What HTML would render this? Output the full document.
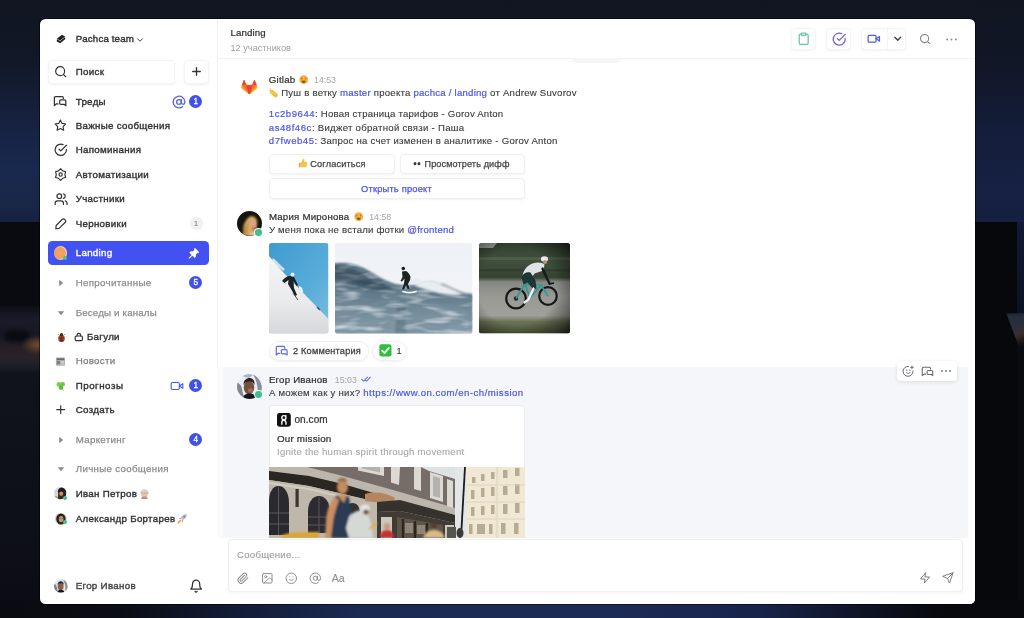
<!DOCTYPE html>
<html lang="ru">
<head>
<meta charset="utf-8">
<title>Pachca</title>
<style>
*{box-sizing:border-box;margin:0;padding:0}
html,body{width:1024px;height:618px;overflow:hidden;background:#10141f}
body{position:relative;font-family:"Liberation Sans",sans-serif;font-size:10px;color:#333;-webkit-font-smoothing:antialiased}
.abs,.t,.sb,.g,.m,.ic{position:absolute}
#bg{position:absolute;left:0;top:0;width:1024px;height:618px;overflow:hidden;background:#10141f}
#bg div{position:absolute}
#win{position:absolute;left:40px;top:18.5px;width:935px;height:585.300px;background:#fff;border-radius:5.500px;overflow:hidden;box-shadow:0 0 0 1px rgba(0,0,0,.55)}
#in{position:absolute;left:-40px;top:-18.5px;width:1024px;height:618px;will-change:transform}
/* text helpers: top = centerY-7 */
.t{height:14px;line-height:14px;white-space:nowrap}
.sb{left:75.7px;font-weight:400;font-size:9.75px;letter-spacing:.3px;color:#333;-webkit-text-stroke-width:.38px}
.g{left:75.7px;font-weight:400;font-size:9.75px;letter-spacing:.3px;color:#8c8c8c;-webkit-text-stroke-width:.25px}
.m{font-size:9.6px;letter-spacing:.26px;color:#3a3a3a;-webkit-text-stroke-width:.12px}
.nm{font-size:9.7px;letter-spacing:.2px;color:#333;-webkit-text-stroke-width:.24px}
.tm{font-size:8.8px;color:#a5a5a5}
.lk{color:#4a55e8;-webkit-text-stroke-width:.2px}
.hs{letter-spacing:.52px}
.badge{position:absolute;width:13.200px;height:13.200px;border-radius:50%;background:#4050ea;color:#fff;font-size:8.200px;font-weight:400;-webkit-text-stroke-width:.3px;text-align:center;line-height:13.200px}
svg{position:absolute;overflow:visible}
.s{fill:none;stroke:#333;stroke-width:2.1;stroke-linecap:round;stroke-linejoin:round}
.btn{position:absolute;background:#fff;border:1px solid #efeff0;border-radius:4px;box-shadow:0 1px 2.500px rgba(0,0,0,.055)}
</style>
</head>
<body>
<div id="bg">

<div style="left:0;top:0;width:1024px;height:222px;background:linear-gradient(180deg,#111521 0%,#121828 28%,#15203c 50%,#19284e 75%,#192749 92%,#162141 100%)"></div>
<div style="left:975px;top:0;width:49px;height:222px;background:linear-gradient(180deg,#111521 0%,#111727 30%,#141d3b 60%,#162143 85%,#151f40 100%)"></div>
<div style="left:0;top:221.500px;width:1024px;height:397px;background:#0a0b11"></div>
<div style="left:0;top:306px;width:44px;height:68px;background:linear-gradient(180deg,#0d0e15 0%,#191b28 18%,#171826 45%,#241f25 60%,#2b2326 75%,#1b1d2a 90%,#10121c 100%)"></div>
<div style="left:4px;top:330px;width:26px;height:12px;border-radius:6px;background:#0b0c12;filter:blur(2px)"></div>
<div style="left:22px;top:336px;width:22px;height:18px;background:radial-gradient(ellipse at 75% 50%,#74502f 0%,#4c3528 40%,rgba(43,35,38,0) 75%);filter:blur(1.5px)"></div>
<div style="left:0;top:372px;width:44px;height:246px;background:linear-gradient(180deg,#10121c 0%,#0e1019 60%,#0b0c12 100%)"></div>
<div style="left:975px;top:222px;width:42px;height:396px;background:#07080c"></div>
<div style="left:1017px;top:222px;width:7px;height:92px;background:linear-gradient(180deg,#121a34,#0d1124)"></div>
<div style="left:1006px;top:313px;width:22px;height:40px;background:linear-gradient(160deg,#262c3c 0%,#2a2e3c 35%,#3a2e2c 55%,#0a0b11 80%);filter:blur(1.5px);clip-path:polygon(0 0,100% 0,100% 100%,70% 100%)"></div>
<div style="left:0;top:600px;width:1024px;height:18px;background:linear-gradient(90deg,#0a0b10 0%,#0b0d14 12%,#131c36 23%,#1b2a52 35%,#1c2b55 60%,#18244a 74%,#0f1426 84%,#08090d 92%,#08090d 100%)"></div>

</div>
<div id="win"><div id="in">
<div class="abs" style="left:216.5px;top:18px;width:1px;height:586px;background:#f3f3f4"></div>
<svg viewBox="0 0 20 20" width="12" height="12" style="left:55.2px;top:33.2px"><path d="M3 9.500 11.500 3 17 6 8.500 12.500Z" fill="#222"/><path d="M3 10.300 8.500 13.300 17 6.800V10.500L8.500 17 3 14Z" fill="#222"/></svg>
<div class="t sb" style="left:75.7px;top:32.40px;letter-spacing:.12px">Pachca team</div>
<svg viewBox="0 0 24 24" width="10" height="10" style="left:134.8px;top:34.6px"><path class="s" style="stroke-width:2.4;stroke:#444" d="m6 9 6 6 6-6"/></svg>
<div class="btn" style="left:47.5px;top:60px;width:127.500px;height:23.500px;border-color:#f3f3f4;box-shadow:0 1px 2.500px rgba(0,0,0,.06)"></div>
<div class="btn" style="left:183.500px;top:60px;width:25px;height:23.500px;border-color:#f3f3f4;box-shadow:0 1px 2.500px rgba(0,0,0,.06)"></div>
<svg viewBox="0 0 24 24" width="13.4" height="13.4" style="left:54.10px;top:65.20px"><g class="s"><circle cx="11" cy="11" r="8"/><path d="m21 21-4.3-4.3"/></g></svg>
<div class="t sb" style="left:75.7px;top:64.80px;">Поиск</div>
<svg viewBox="0 0 24 24" width="13" height="13" style="left:189.50px;top:65.20px"><g class="s" style="stroke-width:2.5;"><path d="M5 12h14"/><path d="M12 5v14"/></g></svg>
<svg viewBox="0 0 24 24" width="14.2" height="14.2" style="left:53.40px;top:93.65px"><g class="s"><path d="M8.5 16.8H5.5L2.35 19.7V6.3a2 2 0 0 1 2-2H15.5a2 2 0 0 1 2 2v1.2"/><path d="M13.3 10h6.350a2 2 0 0 1 2 2v7.700L18.800 17.500H13.300a2 2 0 0 1-2-2V12a2 2 0 0 1 2-2Z"/></g></svg>
<div class="t sb" style="left:75.7px;top:94.70px;">Треды</div>
<svg viewBox="0 0 24 24" width="12.8" height="12.8" style="left:54.30px;top:119.15px"><g class="s"><polygon points="12 2 15.09 8.26 22 9.27 17 14.14 18.18 21.02 12 17.77 5.82 21.02 7 14.14 2 9.27 8.91 8.26 12 2"/></g></svg>
<div class="t sb" style="left:75.7px;top:118.90px;">Важные сообщения</div>
<svg viewBox="0 0 24 24" width="13.6" height="13.6" style="left:53.90px;top:143.20px"><g class="s"><path d="M22 11.08V12a10 10 0 1 1-5.93-9.14"/><path d="m9 11 3 3L22 4"/></g></svg>
<div class="t sb" style="left:75.7px;top:143.20px;">Напоминания</div>
<svg viewBox="0 0 24 24" width="13.2" height="13.2" style="left:54.10px;top:167.70px"><g class="s"><polygon points="12.00 1.40 15.90 5.25 21.18 6.70 19.80 12.00 21.18 17.30 15.90 18.75 12.00 22.60 8.10 18.75 2.82 17.30 4.20 12.00 2.82 6.70 8.10 5.25"/><circle cx="12" cy="12" r="3"/></g></svg>
<div class="t sb" style="left:75.7px;top:167.80px;">Автоматизации</div>
<svg viewBox="0 0 24 24" width="14.2" height="14.2" style="left:53.60px;top:191.60px"><g class="s"><path d="M16 21v-2a4 4 0 0 0-4-4H6a4 4 0 0 0-4 4v2"/><circle cx="9" cy="7" r="4"/><path d="M22 21v-2a4 4 0 0 0-3-3.87"/><path d="M16 3.13a4 4 0 0 1 0 7.75"/></g></svg>
<div class="t sb" style="left:75.7px;top:192.00px;">Участники</div>
<svg viewBox="0 0 24 24" width="13.6" height="13.6" style="left:53.90px;top:216.50px"><g class="s"><path d="M14.800 4a2.600 2.600 0 0 1 3.700 0l1.500 1.500a2.600 2.600 0 0 1 0 3.700L9 20.200 3.200 20.800l.6-5.800Z"/></g></svg>
<div class="t sb" style="left:75.7px;top:216.50px;">Черновики</div>
<svg viewBox="0 0 24 24" width="14" height="14" style="left:171.50px;top:94.50px"><g class="s" style="stroke:#5a64e0;stroke-width:2.3;"><circle cx="12" cy="12" r="4"/><path d="M16 8v5a3 3 0 0 0 6 0v-1a10 10 0 1 0-4 8"/></g></svg>
<div class="badge" style="left:189.3px;top:94.5px">1</div>
<div class="abs" style="left:189.5px;top:216.5px;width:13px;height:13.5px;border-radius:6px;background:#f1f1f2;color:#777;font-size:8px;text-align:center;line-height:13.5px">1</div>
<div class="abs" style="left:47.5px;top:241px;width:161.5px;height:23.7px;border-radius:4.500px;background:#4151f2"></div>
<div class="abs" style="left:54px;top:246.3px;width:13.4px;height:13.4px;border-radius:50%;background:radial-gradient(circle at 45% 50%,#f2a35e 0%,#f0a060 55%,#f6c9a0 62%,#f3e3d0 100%)"></div>
<div class="abs" style="left:63.2px;top:255.8px;width:4px;height:4px;border-radius:50%;background:#49c08a"></div>
<div class="t sb" style="left:75.7px;top:246.10px;color:#fff">Landing</div>
<svg viewBox="0 0 24 24" width="13" height="13" style="left:186.8px;top:246.5px"><path fill="#fff" d="M13.5 2.2c.5-.5 1.300-.5 1.800 0l6.500 6.500c.5.500.5 1.300 0 1.800l-.7.700c-.4.400-1 .500-1.500.200l-.5-.2-2.800 2.800c.6 1.900.3 4-1 5.600-.4.500-1.200.6-1.700.1l-3.600-3.600-5.300 5.300c-.4.400-1.100.4-1.500 0s-.4-1.100 0-1.500l5.300-5.300-3.600-3.600c-.5-.5-.4-1.300.1-1.700 1.600-1.300 3.700-1.600 5.600-1l2.800-2.800-.2-.5c-.3-.5-.2-1.100.2-1.500z"/></svg>
<svg viewBox="0 0 10 10" width="10" height="10" style="left:55.6px;top:278px"><path d="M3.2 1.8 7.2 5 3.2 8.2Z" fill="#8a8a8a"/></svg>
<div class="t g" style="left:75.7px;top:276.00px;">Непрочитанные</div>
<div class="badge" style="left:189.3px;top:275.8px">5</div>
<svg viewBox="0 0 10 10" width="10" height="10" style="left:55.6px;top:307.7px"><path d="M1.8 3.2 8.2 3.2 5 7.2Z" fill="#8a8a8a"/></svg>
<div class="t g" style="left:75.7px;top:305.80px;letter-spacing:.15px">Беседы и каналы</div>
<svg viewBox="0 0 12 12" width="11" height="11" style="left:55.5px;top:331.5px"><ellipse cx="6" cy="7" rx="3.6" ry="4" fill="#b5452c"/><circle cx="6" cy="3" r="1.8" fill="#3a2a24"/><path d="M6 3.5v7.5" stroke="#4a2a20" stroke-width=".7"/><circle cx="4.4" cy="6.5" r=".8" fill="#3a2420"/><circle cx="7.6" cy="6.5" r=".8" fill="#3a2420"/><circle cx="4.8" cy="9" r=".7" fill="#3a2420"/><circle cx="7.2" cy="9" r=".7" fill="#3a2420"/><path d="M2 2l1.500 1.500M10 2 8.500 3.500" stroke="#7a4a3a" stroke-width=".6"/></svg>
<svg viewBox="0 0 24 24" width="9.6" height="9.6" style="left:74.40px;top:332.10px"><g class="s" style="stroke-width:2.9;"><rect width="18" height="11.500" x="3" y="10" rx="2.500" ry="2.500"/><path d="M7.500 10V8a4.500 4.500 0 0 1 9 0v2"/></g></svg>
<div class="t sb" style="left:86.9px;top:330.10px;">Багули</div>
<svg viewBox="0 0 12 12" width="11" height="11" style="left:55.3px;top:355.5px"><rect x="1" y="1.500" width="10" height="9" rx=".8" fill="#b0b0b0"/><rect x="2" y="2.500" width="8" height="2" fill="#6a6a6a"/><rect x="2" y="5.500" width="3.500" height="3.500" fill="#808080"/><rect x="6.300" y="5.500" width="3.700" height=".9" fill="#d8d8d8"/><rect x="6.300" y="7" width="3.700" height=".9" fill="#d8d8d8"/><rect x="6.300" y="8.500" width="3.700" height=".7" fill="#d8d8d8"/></svg>
<div class="t g" style="left:75.7px;top:354.10px;color:#7d7d7d">Новости</div>
<svg viewBox="0 0 12 12" width="11.500" height="11.500" style="left:55px;top:379.5px"><circle cx="4" cy="4.600" r="2.400" fill="#78d050"/><circle cx="8" cy="4.400" r="2.400" fill="#6cc848"/><circle cx="6.200" cy="7.800" r="2.400" fill="#5cbc40"/><path d="M7 8.500c.5 1 1.200 1.800 2.200 2.300" stroke="#5ab040" stroke-width=".8" fill="none"/></svg>
<div class="t sb" style="left:75.7px;top:378.60px;letter-spacing:.52px">Прогнозы</div>
<svg viewBox="0 0 24 24" width="14" height="14" style="left:170.00px;top:378.60px"><g class="s" style="stroke:#4a58ea;stroke-width:1.9;"><path d="m22 8-6 4 6 4V8Z"/><rect width="14" height="12" x="2" y="6" rx="2" ry="2"/></g></svg>
<div class="badge" style="left:189.3px;top:378.5px">1</div>
<svg viewBox="0 0 24 24" width="13.4" height="13.4" style="left:53.90px;top:403.30px"><g class="s"><path d="M5 12h14"/><path d="M12 5v14"/></g></svg>
<div class="t sb" style="left:75.7px;top:403.10px;">Создать</div>
<svg viewBox="0 0 10 10" width="10" height="10" style="left:55.6px;top:434.7px"><path d="M3.2 1.8 7.2 5 3.2 8.2Z" fill="#8a8a8a"/></svg>
<div class="t g" style="left:75.7px;top:432.70px;">Маркетинг</div>
<div class="badge" style="left:189.3px;top:432.5px">4</div>
<svg viewBox="0 0 10 10" width="10" height="10" style="left:55.6px;top:464.3px"><path d="M1.8 3.2 8.2 3.2 5 7.2Z" fill="#8a8a8a"/></svg>
<div class="t g" style="left:75.7px;top:462.40px;">Личные сообщения</div>
<svg viewBox="0 0 24 24" width="12.400" height="12.400" style="left:54px;top:487.300px"><defs><clipPath id="cI"><circle cx="12" cy="12" r="12"/></clipPath><filter id="bI"><feGaussianBlur stdDeviation=".9"/></filter></defs><g clip-path="url(#cI)"><rect width="24" height="24" fill="#d9d6d6"/><g filter="url(#bI)"><path d="M8 24V10c0-5 3-9 8-9s8 4 8 9v14z" fill="#2a2622"/><path d="M7 9c1-6 5-8 9-8s7 3 7 7l-8 1.500z" fill="#1c1d2c"/><ellipse cx="14" cy="13" rx="4" ry="4.500" fill="#c58d58"/><path d="M10 16c2 2 6 2 8 0v6h-8z" fill="#3a2a20"/><path d="M0 18c3-1 6 0 8 2v4H0z" fill="#b98a80"/></g></g></svg>
<div class="abs" style="left:63.100px;top:495.900px;width:4.200px;height:4.200px;border-radius:50%;background:#44c08c"></div>
<div class="t sb" style="left:75.7px;top:487.10px;">Иван Петров</div>
<svg viewBox="0 0 12 12" width="11" height="11" style="left:138.500px;top:488.300px"><circle cx="6" cy="7" r="3.600" fill="#f0c0a8"/><path d="M1.800 5.500a4.200 4.200 0 0 1 8.400 0z" fill="#d9d0c8"/><rect x="1.200" y="5" width="9.600" height="1.100" rx=".5" fill="#b8aea6"/><path d="M2.500 12c0-2 1.500-2.600 3.500-2.600S9.500 10 9.500 12z" fill="#c58a8a"/></svg>
<svg viewBox="0 0 24 24" width="11.800" height="11.800" style="left:54.600px;top:512.600px"><defs><clipPath id="cX"><circle cx="12" cy="12" r="12"/></clipPath><filter id="bX"><feGaussianBlur stdDeviation=".9"/></filter></defs><g clip-path="url(#cX)"><rect width="24" height="24" fill="#cfc8ba"/><g filter="url(#bX)"><ellipse cx="12" cy="12" rx="9.500" ry="11" fill="#2b2418"/><ellipse cx="12.500" cy="12.500" rx="4.800" ry="6.200" fill="#b8997a"/><path d="M5 24c1-4 4-5 7-5s6 1 7 5z" fill="#3a3226"/><path d="M9 11h2M14 11h2" stroke="#3a2a1e" stroke-width="1.200"/></g></g></svg>
<div class="abs" style="left:62.900px;top:520.300px;width:4.200px;height:4.200px;border-radius:50%;background:#44c08c"></div>
<div class="t sb" style="left:75.7px;top:511.60px;">Александр Бортарев</div>
<svg viewBox="0 0 12 12" width="11" height="11" style="left:177px;top:512.800px"><path d="M10.800 1.200C8 1.200 5.500 2.800 4 5.500L6.500 8C9.200 6.500 10.800 4 10.800 1.200z" fill="#b8bcc8"/><path d="M4 5.500 2 5.800 3.500 7.200zM6.500 8 6.200 10 4.800 8.500z" fill="#d0504a"/><circle cx="8" cy="4" r="1" fill="#5a7ad0"/><path d="M3.800 8.200 1.500 10.500" stroke="#f0a030" stroke-width="1.600" stroke-linecap="round"/></svg>
<svg viewBox="0 0 50 50" width="13.800" height="13.800" style="left:53.900px;top:578.800px"><defs><clipPath id="cE2"><circle cx="25" cy="25" r="25"/></clipPath><filter id="bE2"><feGaussianBlur stdDeviation="2.200"/></filter></defs><g clip-path="url(#cE2)"><rect width="50" height="50" fill="#dfe3ea"/><g filter="url(#bE2)"><path d="M-2 16C4 18 9 22 10 30c1 8 3 14 8 20H-2z" fill="#7d7f87"/><path d="M32 1c12 6 20 18 18 38l-9 5c2-16-1-30-9-43z" fill="#8a8e9b"/><ellipse cx="24" cy="27" rx="10.500" ry="13.500" fill="#8a5e48"/><path d="M13 22c0-10 6-14 12-14s11 4 10 14c-2-5-5-7-10-7s-10 2-12 7z" fill="#2a2320"/><path d="M12 50c0-8 6-11 13-11s13 3 13 11z" fill="#15191a"/></g></g></svg>
<div class="t sb" style="left:75.7px;top:578.60px;color:#444">Егор Иванов</div>
<svg viewBox="0 0 24 24" width="14.2" height="14.2" style="left:188.70px;top:578.70px"><g class="s"><path d="M6 8a6 6 0 0 1 12 0c0 7 3 9 3 9H3s3-2 3-9"/><path d="M10.3 21a1.94 1.94 0 0 0 3.4 0"/></g></svg>
<div class="abs" style="left:217px;top:58.3px;width:758px;height:1px;background:#f2f2f3"></div>
<div class="abs" style="left:572px;top:57.500px;width:49px;height:5.500px;border-radius:0 0 5px 5px;background:#f5f5f6"></div>
<div class="t nm" style="left:230.5px;top:26.40px;letter-spacing:.12px">Landing</div>
<div class="t tm" style="left:230.5px;top:40.50px;font-size:9.200px;color:#a0a0a0">12 участников</div>
<div class="btn" style="left:791.3px;top:27.700px;width:24.8px;height:22.800px;border-color:#f4f4f5;box-shadow:0 1px 3px rgba(0,0,0,.055)"></div>
<div class="btn" style="left:825.7px;top:27.700px;width:25.8px;height:22.800px;border-color:#f4f4f5;box-shadow:0 1px 3px rgba(0,0,0,.055)"></div>
<div class="btn" style="left:861px;top:27.700px;width:45.3px;height:22.800px;border-color:#f4f4f5;box-shadow:0 1px 3px rgba(0,0,0,.055)"></div>
<div class="abs" style="left:887px;top:28.500px;width:1px;height:21px;background:#f3f3f4"></div>
<svg viewBox="0 0 24 24" width="13.4" height="13.4" style="left:797.00px;top:32.40px"><g class="s" style="stroke:#66c3a2;stroke-width:2.2;"><rect width="8" height="4" x="8" y="2" rx="1" ry="1"/><path d="M16 4h2a2 2 0 0 1 2 2v14a2 2 0 0 1-2 2H6a2 2 0 0 1-2-2V6a2 2 0 0 1 2-2h2"/></g></svg>
<svg viewBox="0 0 24 24" width="14.4" height="14.4" style="left:831.60px;top:31.80px"><g class="s" style="stroke:#7a60d8;stroke-width:2.2;"><path d="M22 11.08V12a10 10 0 1 1-5.93-9.14"/><path d="m9 11 3 3L22 4"/></g></svg>
<svg viewBox="0 0 24 24" width="13.6" height="13.6" style="left:867.00px;top:32.20px"><g class="s" style="stroke:#4f5bec;stroke-width:2.2;"><path d="m22 8-6 4 6 4V8Z"/><rect width="14" height="12" x="2" y="6" rx="2" ry="2"/></g></svg>
<svg viewBox="0 0 24 24" width="11.5" height="11.5" style="left:891.65px;top:33.45px"><g class="s" style="stroke:#444;stroke-width:3;"><path d="m6 9 6 6 6-6"/></g></svg>
<svg viewBox="0 0 24 24" width="12.2" height="12.2" style="left:918.70px;top:33.30px"><g class="s" style="stroke:#808080;stroke-width:2.1;"><circle cx="11" cy="11" r="8"/><path d="m21 21-4.3-4.3"/></g></svg>
<svg viewBox="0 0 24 24" width="15" height="15" style="left:944.200px;top:31.600px"><g fill="#8a8a8a"><circle cx="5" cy="12" r="1.500"/><circle cx="12" cy="12" r="1.500"/><circle cx="19" cy="12" r="1.500"/></g></svg>
<svg viewBox="0 0 36 34" width="16.600" height="15.700" style="left:241.300px;top:78.800px"><g stroke-linejoin="round" stroke-width="1.600"><path d="M2.500 13.500 6.700 2.200 11.400 13.500z" fill="#e24329" stroke="#e24329"/><path d="M33.500 13.500 29.300 2.200 24.600 13.500z" fill="#e24329" stroke="#e24329"/><path d="M2.500 13.500 1 19.500 18 32.500z" fill="#fca326" stroke="#fca326"/><path d="M33.500 13.500 35 19.500 18 32.500z" fill="#fca326" stroke="#fca326"/><path d="M2.500 13.500H11.400L18 32.500z" fill="#fc6d26" stroke="#fc6d26"/><path d="M33.500 13.500H24.600L18 32.500z" fill="#fc6d26" stroke="#fc6d26"/><path d="M11.400 13.500H24.600L18 32.500z" fill="#e24329" stroke="#e24329"/></g></svg>
<div class="t nm" style="left:268.8px;top:73.20px;">Gitlab</div>
<svg viewBox="0 0 12 12" width="9.4" height="9.4" style="left:298.7px;top:75.4px"><circle cx="6" cy="6" r="5.600" fill="#f2b43c"/><path d="M2 4.800 3.500 2.600 5 4.800 3.500 6zM7 4.800 8.500 2.600 10 4.800 8.500 6z" fill="#d8782a"/><path d="M3.300 7.500h5.400a2.700 2.700 0 0 1-5.400 0z" fill="#7a4a20"/></svg>
<div class="t tm" style="left:314px;top:73.40px;">14:53</div>
<svg viewBox="0 0 12 12" width="9.600" height="9.600" style="left:268.600px;top:87.900px"><path d="M1.300 2.800c1-1.200 2.800-1.200 3.800-.2l5 4.400c1.200 1.100 1.300 2.800.3 3.900-1 1.100-2.800 1.200-4 .1L1.800 6.800C.6 5.700.4 3.900 1.300 2.800z" fill="#f2c64a"/><path d="M5.500 9.500c1.500.8 3.200.5 4.300-.8" stroke="#d9a232" stroke-width=".8" fill="none"/><path d="M1 1.300 2.500.7M.6 3l1-.2" stroke="#e0a030" stroke-width=".8"/></svg>
<div class="t m" style="left:281.2px;top:86.40px;letter-spacing:.24px">Пуш в ветку <span class="lk">master</span> проекта <span class="lk">pachca / landing</span> от Andrew Suvorov</div>
<div class="t m" style="left:268.8px;top:106.80px;letter-spacing:.21px"><span class="lk hs">1c2b9644</span>: Новая страница тарифов - Gorov Anton</div>
<div class="t m" style="left:268.8px;top:120.50px;letter-spacing:.28px"><span class="lk hs">as48f46c</span>: Виджет обратной связи - Паша</div>
<div class="t m" style="left:268.8px;top:134.10px;letter-spacing:.24px"><span class="lk hs">d7fweb45</span>: Запрос на счет изменен в аналитике - Gorov Anton</div>
<div class="btn" style="left:269px;top:153.700px;width:125.600px;height:20.300px"></div>
<div class="btn" style="left:400px;top:153.700px;width:125px;height:20.300px"></div>
<div class="btn" style="left:269px;top:178.100px;width:256px;height:20.500px"></div>
<svg viewBox="0 0 12 12" width="10.200" height="10.200" style="left:297.800px;top:158.400px"><path d="M1 5.500h2.200v5.500H1z" fill="#e8a838"/><path d="M3.600 5.500 6 1c1.200 0 1.800 1 1.500 2.200L7.200 4.500h2.600c.9 0 1.400.8 1.200 1.600l-.9 3.800c-.2.700-.8 1.100-1.500 1.100H3.600z" fill="#f4c244"/></svg>
<div class="t nm" style="left:310.3px;top:157.10px;font-size:9.200px;letter-spacing:.15px;-webkit-text-stroke-width:.25px;color:#444">Согласиться</div>
<svg viewBox="0 0 12 8" width="8" height="5.300" style="left:412.500px;top:161.400px"><ellipse cx="3" cy="4" rx="2.200" ry="2.600" fill="#3a3a3a"/><ellipse cx="9" cy="4" rx="2.200" ry="2.600" fill="#3a3a3a"/></svg>
<div class="t nm" style="left:424.5px;top:157.10px;font-size:9.100px;letter-spacing:.12px;-webkit-text-stroke-width:.25px;color:#444">Просмотреть дифф</div>
<div class="t nm" style="left:361px;top:181.80px;font-size:9.300px;-webkit-text-stroke-width:.25px;color:#4a55e8">Открыть проект</div>
<svg viewBox="0 0 50 50" width="25" height="25" style="left:237.200px;top:210.700px"><defs><clipPath id="cA"><circle cx="25" cy="25" r="25"/></clipPath><filter id="bA"><feGaussianBlur stdDeviation="1.6"/></filter></defs><g clip-path="url(#cA)"><rect width="50" height="50" fill="#15140f"/><g filter="url(#bA)"><path d="M20 50C8 44 12 24 22 14c6-6 16-4 18 6 1 8-2 14-1 30z" fill="#d9ac62"/><ellipse cx="31" cy="26" rx="7.500" ry="10" fill="#dba583"/><path d="M10 50c2-12 8-22 14-30-2 10-4 20-3 30z" fill="#c08a3c"/><ellipse cx="34" cy="35" rx="4" ry="3" fill="#b5503a"/><path d="M24 50c2-6 8-8 14-7v7z" fill="#e8cdb4"/></g></g></svg>
<div class="abs" style="left:255.29999999999998px;top:228.79999999999998px;width:6.8px;height:6.8px;border-radius:50%;background:#3fbf8c;box-shadow:0 0 0 1px #fff"></div>
<div class="t nm" style="left:268.9px;top:209.70px;">Мария Миронова</div>
<svg viewBox="0 0 12 12" width="9.4" height="9.4" style="left:353.8px;top:211.9px"><circle cx="6" cy="6" r="5.600" fill="#f2b43c"/><path d="M2 4.800 3.500 2.600 5 4.800 3.500 6zM7 4.800 8.500 2.600 10 4.800 8.500 6z" fill="#d8782a"/><path d="M3.300 7.500h5.400a2.700 2.700 0 0 1-5.400 0z" fill="#7a4a20"/></svg>
<div class="t tm" style="left:369.2px;top:210.00px;">14:58</div>
<div class="t m" style="left:268.9px;top:223.30px;letter-spacing:.2px">У меня пока не встали фотки <span class="lk">@frontend</span></div>
<svg viewBox="0 0 59.500 90.500" width="59.500" height="90.500" style="left:269px;top:243px"><defs><clipPath id="c1"><rect width="59.500" height="90.500" rx="2.500"/></clipPath><linearGradient id="sky1" x1="0" y1="0" x2="1" y2="1"><stop offset="0" stop-color="#3f9bd0"/><stop offset=".6" stop-color="#58acd8"/><stop offset="1" stop-color="#7cc0e0"/></linearGradient><linearGradient id="snow1" x1="0" y1="0" x2="0" y2="1"><stop offset="0" stop-color="#f4f5f7"/><stop offset=".6" stop-color="#e9eaec"/><stop offset="1" stop-color="#d6d7d9"/></linearGradient><filter id="b1"><feGaussianBlur stdDeviation=".5"/></filter></defs><g clip-path="url(#c1)"><rect width="59.500" height="90.500" fill="url(#sky1)"/><path d="M0 13 6 20 12 27 59.500 76V90.500H0z" fill="url(#snow1)"/><g filter="url(#b1)"><path d="M4 15c3 2 8 8 12 11l-2 2c-4-3-8-7-11-10z" fill="#eef1f4" opacity=".8"/><path d="M13 38c2-3 5-5 8-5l4 1 4 8-1.500 1-3-5 .5 7 3 7-2 1-4-7-3-5 .5-4-4 3z" fill="#1d2428"/><circle cx="23.500" cy="31.500" r="2" fill="#e8eef2"/><path d="M24 50l5 7" stroke="#444" stroke-width="1"/><path d="M30 44c2 1 3 3 3 5" stroke="#f7f8fa" stroke-width="2" fill="none"/><path d="M48 64l3 3" stroke="#2a5a78" stroke-width="1.500"/></g></g></svg>
<svg viewBox="0 0 137.500 90.500" width="137.500" height="90.500" style="left:335px;top:243px"><defs><clipPath id="c2"><rect width="137.500" height="90.500" rx="2.500"/></clipPath><clipPath id="cw2"><path d="M-4 21c10-2 20-1 30 3 12 5 20 13 34 17 8 2 16 1 24 1 6-4 14-4 22 0l10 5c6 2 12 3 22 4V96H-4z"/></clipPath><linearGradient id="sky2" x1="0" y1="0" x2="0" y2="1"><stop offset="0" stop-color="#eef1f6"/><stop offset="1" stop-color="#f3f5f8"/></linearGradient><linearGradient id="w2" x1="0" y1="0" x2="0" y2="1"><stop offset=".2" stop-color="#4a6373"/><stop offset=".45" stop-color="#657e8d"/><stop offset=".7" stop-color="#7a909e"/><stop offset="1" stop-color="#8a9fac"/></linearGradient><filter id="b2"><feGaussianBlur stdDeviation="1.100"/></filter><filter id="b2s"><feGaussianBlur stdDeviation=".45"/></filter><filter id="n2" x="0" y="0" width="100%" height="100%"><feTurbulence type="fractalNoise" baseFrequency=".035 .13" numOctaves="3" seed="7"/><feColorMatrix values="0 0 0 0 .18  0 0 0 0 .27  0 0 0 0 .34  1.900 0 0 0 -.75"/><feGaussianBlur stdDeviation=".6"/></filter><filter id="n2b" x="0" y="0" width="100%" height="100%"><feTurbulence type="fractalNoise" baseFrequency=".04 .16" numOctaves="2" seed="21"/><feColorMatrix values="0 0 0 0 .80  0 0 0 0 .86  0 0 0 0 .90  0 1.800 0 0 -.85"/><feGaussianBlur stdDeviation=".6"/></filter></defs><g clip-path="url(#c2)"><rect width="137.500" height="90.500" fill="url(#sky2)"/><g filter="url(#b2)"><path d="M-4 21c10-2 20-1 30 3 12 5 20 13 34 17 8 2 16 1 24 1 6-4 14-4 22 0l10 5c6 2 12 3 22 4V96H-4z" fill="url(#w2)"/><path d="M-2 23c12-1 24 3 34 10 8 6 16 9 26 11-10 3-26 0-36-5-8-4-16-6-24-6z" fill="#3c5261"/><path d="M60 50c2 10 2 22 0 40h12c-2-16-2-30 0-40z" fill="#4f6675" opacity=".55"/></g><g clip-path="url(#cw2)"><rect width="137.500" height="90.500" filter="url(#n2)"/><rect width="137.500" height="90.500" filter="url(#n2b)"/><path d="M-2 24c12-1 24 3 34 10 8 6 16 9 26 11-10 4-26 2-36-3-8-4-16-6-24-6z" fill="#34495a" opacity=".55" filter="url(#b2)"/></g><g filter="url(#b2)"><path d="M80 43c6-7 16-7 25-3 8 4 14 8 27 10-10 3-22 2-32-1-8-2-14-4-20-6z" fill="#e9edf1"/><path d="M106 41c8 2 14 7 24 10" stroke="#7f95a3" stroke-width="1.600" fill="none"/><path d="M72 41c4-3 8-4 12-3" stroke="#dfe5ea" stroke-width="2" fill="none"/></g><g filter="url(#b2s)"><path d="M66.500 25.500a1.800 1.800 0 1 1 3.600 0 1.800 1.800 0 0 1-3.600 0zM67 28.500l4-.5c2 1 4 3.500 4.500 6l-.5 3-2 4 1.500 5h-2l-1.500-4-2 4.500h-2l2-6 .5-5-2.500 3-1.500-.5 2-4z" fill="#1a2024"/><path d="M68 48.500c4 1.500 9 1.500 13 0" stroke="#f2f2f0" stroke-width="1.800" fill="none" stroke-linecap="round"/></g></g></svg>
<svg viewBox="0 0 91 90.500" width="91" height="90.500" style="left:478.600px;top:243px"><defs><clipPath id="c3"><rect width="91" height="90.500" rx="2.500"/></clipPath><linearGradient id="g3" x1="0" y1="0" x2="0" y2="1"><stop offset="0" stop-color="#354131"/><stop offset=".2" stop-color="#40503d"/><stop offset=".38" stop-color="#364332"/><stop offset=".43" stop-color="#858781"/><stop offset=".6" stop-color="#9a9a95"/><stop offset=".8" stop-color="#a0a09a"/><stop offset=".87" stop-color="#6a7356"/><stop offset="1" stop-color="#4c5838"/></linearGradient><radialGradient id="v3" cx=".42" cy=".48" r=".78"><stop offset=".55" stop-color="#000" stop-opacity="0"/><stop offset=".85" stop-color="#000" stop-opacity=".45"/><stop offset="1" stop-color="#000" stop-opacity=".8"/></radialGradient><filter id="b3"><feGaussianBlur stdDeviation=".45"/></filter></defs><g clip-path="url(#c3)"><rect width="91" height="90.500" fill="url(#g3)"/><path d="M0 0h18l-4 5H0z" fill="#aab0ae" opacity=".8" filter="url(#b3)"/><rect y="14" width="91" height="3" fill="#56684f" opacity=".6"/><rect y="26" width="91" height="2.500" fill="#2f3b2c" opacity=".6"/><g filter="url(#b3)"><circle cx="37" cy="55.500" r="9.800" fill="none" stroke="#16181a" stroke-width="2.200"/><circle cx="69" cy="53" r="8.800" fill="none" stroke="#16181a" stroke-width="2.200"/><circle cx="37" cy="55.500" r="2.200" fill="#1d2a2a"/><path d="M37 55.500 46 41 62 42 69 53M46 41 51 55 62 42" stroke="#2f9a98" stroke-width="1.800" fill="none"/><g transform="translate(-.5 -1.500)"><path d="M44 36c0-6 4-12 10-14 5-2 10-1 12 1l-1 6-9 3-4 6z" fill="#dfe3e6"/><path d="M43 36c1-4 5-6 9-5l5 8 1 8-3 1-6-7-4 2z" fill="#1d3436"/><path d="M55 47 50 58l-4 3" stroke="#f2f2f2" stroke-width="2.200" fill="none" stroke-linecap="round"/><path d="M64 27l4 9 3 6" stroke="#151a1c" stroke-width="2.400" fill="none" stroke-linecap="round"/><ellipse cx="66" cy="17.500" rx="3.600" ry="2.800" fill="#e9edf0"/><circle cx="66.500" cy="20.500" r="2" fill="#b99080"/></g><path d="M70 41l5-1" stroke="#111" stroke-width="1.500"/></g><rect width="91" height="90.500" fill="url(#v3)"/></g></svg>
<div class="btn" style="left:269px;top:340.700px;width:99.600px;height:20.600px;border-radius:10.300px;border-color:#f0f0f1"></div>
<div class="btn" style="left:372.200px;top:340.700px;width:34.500px;height:20.600px;border-radius:10.300px;border-color:#f0f0f1"></div>
<svg viewBox="0 0 24 24" width="13.4" height="13.4" style="left:275.10px;top:343.90px"><g class="s" style="stroke:#5f69e6;stroke-width:2.2;"><path d="M8.5 16.8H5.5L2.35 19.7V6.3a2 2 0 0 1 2-2H15.5a2 2 0 0 1 2 2v1.2"/><path d="M13.3 10h6.350a2 2 0 0 1 2 2v7.700L18.800 17.500H13.300a2 2 0 0 1-2-2V12a2 2 0 0 1 2-2Z"/></g></svg>
<div class="t nm" style="left:293px;top:344.20px;font-size:9.200px;letter-spacing:.2px;-webkit-text-stroke-width:.3px;color:#444">2 Комментария</div>
<svg viewBox="0 0 12 12" width="12.800" height="12.800" style="left:378.600px;top:344.400px"><rect x=".3" y=".3" width="11.400" height="11.400" rx="2" fill="#2dbf3e"/><path d="M3 6.200 5.200 8.500 9.200 3.600" stroke="#fff" stroke-width="1.700" fill="none" stroke-linecap="round" stroke-linejoin="round"/></svg>
<div class="t nm" style="left:396.4px;top:344.20px;font-size:9.200px;-webkit-text-stroke-width:.2px;color:#444">1</div>
<div class="abs" style="left:217px;top:366.600px;width:6.300px;height:172px;background:#fbfbfc"></div>
<div class="abs" style="left:223.300px;top:366.600px;width:744.500px;height:172px;background:#f5f6fa"></div>
<div class="abs" style="left:897px;top:360.700px;width:59.700px;height:20.200px;border-radius:3.500px;background:#fff;box-shadow:0 1px 4px rgba(0,0,0,.1),0 0 1px rgba(0,0,0,.08)"></div>
<svg viewBox="0 0 24 24" width="12.6" height="12.6" style="left:901.90px;top:364.70px"><g class="s" style="stroke:#6a6a6a;stroke-width:1.9;"><path d="M21 11.5A9.5 9.5 0 1 1 12.5 2.6"/><path d="M8.5 14s1.3 2 3.5 2 3.5-2 3.5-2"/><path d="M9 9.5v1"/><path d="M15 9.5v1"/><path d="M19 2v5"/><path d="M16.5 4.5h5"/></g></svg>
<svg viewBox="0 0 24 24" width="13" height="13" style="left:920.70px;top:364.70px"><g class="s" style="stroke:#6a6a6a;stroke-width:2;"><path d="M8.5 16.8H5.5L2.35 19.7V6.3a2 2 0 0 1 2-2H15.5a2 2 0 0 1 2 2v1.2"/><path d="M13.3 10h6.350a2 2 0 0 1 2 2v7.700L18.800 17.500H13.300a2 2 0 0 1-2-2V12a2 2 0 0 1 2-2Z"/></g></svg>
<svg viewBox="0 0 24 24" width="14" height="14" style="left:939.300px;top:364px"><g fill="#777"><circle cx="5" cy="12" r="1.600"/><circle cx="12" cy="12" r="1.600"/><circle cx="19" cy="12" r="1.600"/></g></svg>
<svg viewBox="0 0 50 50" width="25" height="25" style="left:237.200px;top:373.700px"><defs><clipPath id="cE"><circle cx="25" cy="25" r="25"/></clipPath><filter id="bE"><feGaussianBlur stdDeviation="1.500"/></filter></defs><g clip-path="url(#cE)"><rect width="50" height="50" fill="#e9ecf2"/><g filter="url(#bE)"><path d="M-2 16C4 18 9 22 10 30c1 8 3 14 8 20H-2z" fill="#85878f"/><path d="M32 1c12 6 20 18 18 38l-9 5c2-16-1-30-9-43z" fill="#8a8e9b"/><path d="M10 4c4-4 14-6 22-2L24 8z" fill="#a9b4c6"/><ellipse cx="24" cy="27" rx="10.500" ry="13.500" fill="#74503f"/><path d="M13 22c0-10 6-14 12-14s11 4 10 14c-2-5-5-7-10-7s-10 2-12 7z" fill="#2a2320"/><ellipse cx="27" cy="33" rx="5" ry="5" fill="#9a6a58"/><path d="M12 50c0-8 6-11 13-11s13 3 13 11z" fill="#15191a"/></g></g></svg>
<div class="abs" style="left:255.29999999999998px;top:391.3px;width:6.8px;height:6.8px;border-radius:50%;background:#3fbf8c;box-shadow:0 0 0 1px #f5f6fa"></div>
<div class="t nm" style="left:268.9px;top:372.70px;">Егор Иванов</div>
<div class="t tm" style="left:334.8px;top:373.00px;">15:03</div>
<svg viewBox="0 0 24 14" width="11" height="6.400" style="left:360.600px;top:375.800px"><path d="M1.500 7.500 5.500 11.500 14 2.500M10 9.500l2 2 8.500-9" fill="none" stroke="#5e68e2" stroke-width="2.300" stroke-linecap="round" stroke-linejoin="round"/></svg>
<div class="t m" style="left:268.9px;top:386.00px;">А можем как у них? <span class="lk" style="-webkit-text-stroke-width:.2px;letter-spacing:.48px">https://www.on.com/en-ch/mission</span></div>
<div class="abs" style="left:269px;top:405.400px;width:256px;height:140px;background:#fff;border:1px solid #ececee;border-radius:3px"></div>
<svg viewBox="0 0 28 28" width="13.800" height="13.800" style="left:276.700px;top:412.800px"><rect width="28" height="28" rx="5" fill="#111"/><g fill="none" stroke="#fff" stroke-width="2.800"><circle cx="14" cy="9.500" r="4.200"/><path d="M9.800 24v-5a4.200 4.200 0 0 1 8.400 0v5"/></g><circle cx="18" cy="5.500" r="1.600" fill="#fff"/></svg>
<div class="t nm" style="left:294.4px;top:413.20px;font-size:10px;letter-spacing:.1px">on.com</div>
<div class="t nm" style="left:277px;top:432.20px;font-size:9.800px">Our mission</div>
<div class="t m" style="left:277px;top:445.20px;color:#a9a9ab">Ignite the human spirit through movement</div>
<svg viewBox="0 0 256 71" width="256" height="71" style="left:269.300px;top:467px"><defs><clipPath id="cp"><rect width="256" height="71"/></clipPath><filter id="bp"><feGaussianBlur stdDeviation=".7"/></filter><filter id="bp2"><feGaussianBlur stdDeviation="1.200"/></filter></defs><g clip-path="url(#cp)"><rect width="256" height="71" fill="#bdb5a9"/>
<g filter="url(#bp)">
<!-- upper wall -->
<path d="M38 0H186V46L131 30 74 13 40 5z" fill="#776d67"/>
<!-- cornice light band -->
<path d="M0 0H38L74 9 131 25 186 41V48L131 33 74 17 40 9 0 4z" fill="#bcb6ad"/>
<!-- shadow under cornice -->
<path d="M0 4 40 9 74 17 108 27V35L74 27 40 19 0 13z" fill="#2b2521"/>
<!-- ground floor wall -->
<path d="M0 13 40 19 74 27 108 35V71H0z" fill="#bfb7ab"/>
<path d="M0 16 40 22 74 30" stroke="#d2ccc2" stroke-width="2" fill="none"/>
<!-- arches -->
<path d="M0 68V34c0-9 4-15 9.500-15S20 25 20 36V68z" fill="#2c2b2e"/>
<path d="M39 66V44c0-9 5-15 11-15s11 6 11 16v21z" fill="#2d2c30"/>
<path d="M76 58V46c0-6 3-10 7.500-10S91 40 91 46v12z" fill="#313036"/>
<rect x="26.500" y="22" width="3.200" height="18" fill="#3b342e"/>
<path d="M0 46H20M39 50H61M9.500 20V68M50 30V66M0 57H20M39 58H61" stroke="#5b5b60" stroke-width=".9"/>
<!-- windows upper -->
<path d="M89 0h26v9L89 3.500zM122 0h9l-1 18-8-2.500zM145 0l7 0v24l-7-2zM161 5l13 4v26l-13-4zM178 12l6 2v27l-6-2z" fill="#dcd9d3"/>
<path d="M93 0h18v5.500L93 1.500zM164 9l7 2v20l-7-2z" fill="#b4b2ae"/>
<!-- curved canopy + awning -->
<path d="M96 27c10-3 22-1 30 4l-2 6-28-3z" fill="#b38560"/>
<path d="M108 35 131 33 186 48V56L131 44 108 45z" fill="#34312d"/>
<path d="M108 45 131 44 186 56V71H108z" fill="#403b36"/>
<path d="M112 50h11v21h-11zM176 58h9v13h-9z" fill="#cdc7bc"/>
<path d="M128 50 174 58V71H128z" fill="#5d544a"/>
<path d="M134 52v19M146 54v17M158 56v15" stroke="#29251f" stroke-width="2.200"/>
<path d="M136 56h8v10h-8zM148 58h8v9h-8z" fill="#a59a86" opacity=".7"/>
<!-- sky -->
<path d="M186 0h12V71h-12z" fill="#e2e6e7"/>
<path d="M152 0h34v12L160 4z" fill="#dfe2e2"/>
<!-- cream building -->
<rect x="197" y="0" width="59" height="71" fill="#f0e8d5"/>
<g fill="#b7ac92"><rect x="203" y="10" width="3.500" height="6"/><rect x="212" y="7" width="3.500" height="7"/><rect x="222" y="5" width="3.500" height="7"/><rect x="234" y="3" width="4.500" height="8"/><rect x="246" y="1" width="4.500" height="8"/>
<rect x="202" y="23" width="3.500" height="9"/><rect x="212" y="21" width="3.500" height="9"/><rect x="222" y="20" width="3.500" height="9"/><rect x="234" y="19" width="4.500" height="9"/><rect x="246" y="17" width="4.500" height="10"/>
<rect x="202" y="40" width="3.500" height="9"/><rect x="212" y="39" width="3.500" height="9"/><rect x="222" y="38" width="3.500" height="9"/><rect x="234" y="37" width="4.500" height="10"/><rect x="246" y="36" width="4.500" height="10"/>
<rect x="200" y="57" width="3.500" height="10"/><rect x="208" y="57" width="8" height="10"/><rect x="220" y="57" width="3.500" height="10"/><rect x="232" y="56" width="4.500" height="11"/><rect x="245" y="56" width="4.500" height="11"/></g>
<path d="M197 18h59M197 35h59M197 52h59" stroke="#ddd3ba" stroke-width="1.200"/>
<path d="M228 0V71" stroke="#e6ddc7" stroke-width="2.500"/>
<!-- pole -->
<path d="M196 0 192.500 62" stroke="#1c1c1e" stroke-width="1.800"/>
<ellipse cx="191" cy="66" rx="3.500" ry="5" fill="#3a3a34"/>
<path d="M178 60h9v11h-9z" fill="#55554e"/>
</g>
<g filter="url(#bp2)">
<!-- main man -->
<ellipse cx="73.500" cy="20" rx="5.500" ry="7" fill="#c48b5e"/>
<path d="M68 15c1-4 5-5 9-3l1 3-5-1z" fill="#8a6a48"/>
<path d="M66 30c4-3 10-3 14 0l2 16-2 25H60l2-22z" fill="#2c3a52"/>
<path d="M66 30c-6 6-9 16-9 26l-1 15h6l2-16c1-8 4-16 6-22z" fill="#c98f62"/>
<path d="M68 28h10l-3 8z" fill="#c98f62"/>
<!-- white shirt -->
<path d="M80 50c4-6 12-8 18-6l4 12 2 15H80l-3-10z" fill="#d5d8d4"/>
<ellipse cx="96" cy="41" rx="5" ry="3.500" fill="#e6e6e2"/>
<circle cx="97" cy="45" r="2.600" fill="#6a5040"/>
<path d="M100 62l8-6" stroke="#e0b03a" stroke-width="2"/>
<!-- red shirt -->
<circle cx="118" cy="59.500" r="3.200" fill="#c99a80"/>
<path d="M111 71c0-6 3-8 7-8s7 2 7 8z" fill="#c23030"/>
<!-- far person -->
<circle cx="165" cy="58" r="3.200" fill="#5a3a2a"/>
<path d="M154 71c2-6 6-8 11-8s9 2 11 8z" fill="#d9b88a"/>
<!-- yellow -->
<path d="M10 71c4-5 12-6 40-6v6z" fill="#dba535"/>
</g></g></svg>
<div class="abs" style="left:217px;top:538px;width:758px;height:66px;background:#fff"></div>
<div class="abs" style="left:228.300px;top:538.600px;width:734.700px;height:53.300px;background:#fff;border:1px solid #efeff1;border-radius:4px;box-shadow:0 1px 3px rgba(0,0,0,.05)"></div>
<div class="t m" style="left:237px;top:547.50px;color:#9c9c9e">Сообщение...</div>
<svg viewBox="0 0 24 24" width="12.2" height="12.2" style="left:237.30px;top:571.90px"><g class="s" style="stroke:#8e8e90;stroke-width:2;"><path d="m21.44 11.05-9.19 9.19a6 6 0 0 1-8.49-8.49l8.57-8.57A4 4 0 1 1 18 8.84l-8.59 8.57a2 2 0 0 1-2.83-2.83l8.49-8.48"/></g></svg>
<svg viewBox="0 0 24 24" width="12.6" height="12.6" style="left:261.00px;top:571.70px"><g class="s" style="stroke:#8e8e90;stroke-width:1.9;"><rect width="18" height="18" x="3" y="3" rx="2" ry="2"/><circle cx="9" cy="9" r="2"/><path d="m21 15-3.086-3.086a2 2 0 0 0-2.828 0L6 21"/></g></svg>
<svg viewBox="0 0 24 24" width="12.6" height="12.6" style="left:284.90px;top:571.70px"><g class="s" style="stroke:#8e8e90;stroke-width:1.9;"><circle cx="12" cy="12" r="10"/><path d="M8 14s1.5 2 4 2 4-2 4-2"/><path d="M9 9h.01"/><path d="M15 9h.01"/></g></svg>
<svg viewBox="0 0 24 24" width="12.6" height="12.6" style="left:308.70px;top:571.70px"><g class="s" style="stroke:#8e8e90;stroke-width:1.9;"><circle cx="12" cy="12" r="4"/><path d="M16 8v5a3 3 0 0 0 6 0v-1a10 10 0 1 0-4 8"/></g></svg>
<div class="t m" style="left:331.8px;top:571.30px;color:#8e8e90;font-size:10.600px;letter-spacing:0">Aa</div>
<svg viewBox="0 0 24 24" width="12" height="12" style="left:918.60px;top:572.00px"><g class="s" style="stroke:#777;stroke-width:1.9;"><polygon points="13 2 3 14 12 14 11 22 21 10 12 10 13 2"/></g></svg>
<svg viewBox="0 0 24 24" width="12" height="12" style="left:942.20px;top:572.20px"><g class="s" style="stroke:#777;stroke-width:1.9;"><path d="m22 2-7 20-4-9-9-4Z"/><path d="M22 2 11 13"/></g></svg>
</div></div>
</body>
</html>
